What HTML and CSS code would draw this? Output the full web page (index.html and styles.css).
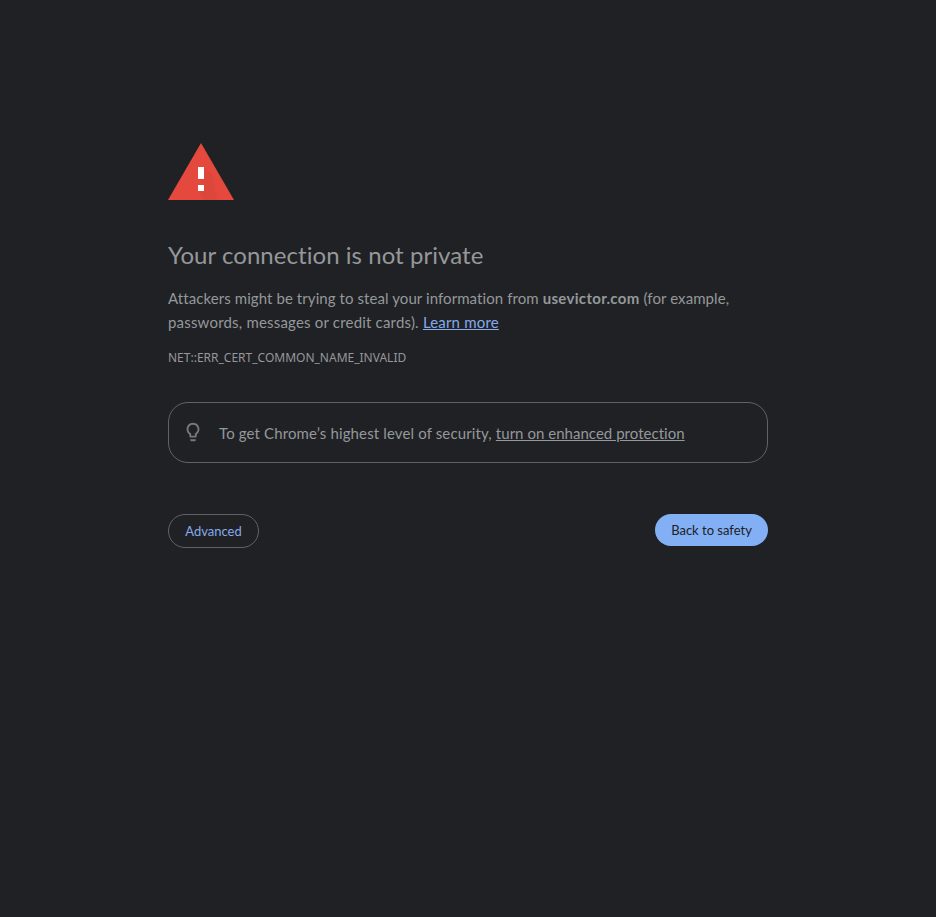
FILE: index.html
```html
<!DOCTYPE html>
<html lang="en">
<head>
<meta charset="utf-8">
<title>Privacy error</title>
<link rel="stylesheet" href="styles.css">
</head>
<body>
<main class="interstitial">
  <svg class="warning-icon" viewBox="0 0 66 57" aria-hidden="true">
    <path fill="#e5493d" d="M0 57h66L33 0z"/>
    <path fill="#d54338" d="M36 24l8 8 5 25H36l-6-9 6-6-6-6z" opacity=".5"/>
    <path fill="#fff" d="M30 24h6v12h-6zM30 42h6v6h-6z"/>
  </svg>
  <h1>Your connection is not private</h1>
  <p class="message">Attackers might be trying to steal your information from <strong>usevictor.com</strong> (for example,<br><span class="details">passwords, messages or credit cards). <a href="#">Learn more</a></span></p>
  <div class="error-code">NET::ERR_CERT_COMMON_NAME_INVALID</div>
  <div class="protection">
    <svg class="bulb" viewBox="0 0 24 24" aria-hidden="true"><path fill="currentColor" d="M9 21c0 .5.4 1 1 1h4c.6 0 1-.5 1-1v-1H9v1zm3-19C8.100 2 5 5.100 5 9c0 2.400 1.200 4.500 3 5.700V17c0 .5.4 1 1 1h6c.6 0 1-.5 1-1v-2.300c1.800-1.300 3-3.400 3-5.700 0-3.900-3.100-7-7-7zm2.900 11.100l-.9.6V16h-4v-2.300l-.9-.6C7.800 12.200 7 10.600 7 9c0-2.800 2.200-5 5-5s5 2.200 5 5c0 1.600-.8 3.200-2.100 4.100z"/></svg>
    <p>To get Chrome’s highest level of security, <a href="#">turn on enhanced protection</a></p>
  </div>
  <div class="actions">
    <button class="secondary">Advanced</button>
    <button class="primary">Back to safety</button>
  </div>
</main>
</body>
</html>
```
FILE: styles.css
```css
body {
  margin: 0;
  min-height: 917px;
  box-sizing: border-box;
  background: #202124;
  color: #94989b;
  font: 15px/24px Lato, sans-serif;
}
.interstitial { width: 600px; margin: 0 auto; padding-top: 143px; }
.warning-icon { display: block; width: 66px; height: 57px; }
h1 { margin: 39px 0 0; font-size: 24px; line-height: 32px; font-weight: 400; letter-spacing: .05px; }
.message { margin: 15px 0 0; letter-spacing: .08px; }
.message strong { letter-spacing: .32px; }
.details { letter-spacing: .19px; }
a { color: #84abeb; }
.error-code { margin-top: 15px; font: 12px/18px "Noto Sans", sans-serif; }
.protection {
  display: flex;
  align-items: center;
  box-sizing: border-box;
  height: 61px;
  margin-top: 35px;
  padding: 0 14px;
  border: 1px solid #5f6368;
  border-radius: 20px;
}
.protection p { margin: 1px 0 0 16px; letter-spacing: .13px; }
.protection a { color: inherit; letter-spacing: .03px; }
.bulb { width: 22px; height: 22px; margin: 0 -1px 2px -1px; color: #77797c; }
.actions { display: flex; justify-content: space-between; align-items: flex-start; margin-top: 51px; }
button { box-sizing: border-box; padding: 0; border-radius: 17px; font: 13px/20px Lato, sans-serif; }
.secondary { width: 91px; height: 34px; border: 1px solid #5f6368; background: none; color: #84abeb; }
.primary { width: 113px; height: 32px; border: 0; background: #83aff5; color: #202124; }
```
